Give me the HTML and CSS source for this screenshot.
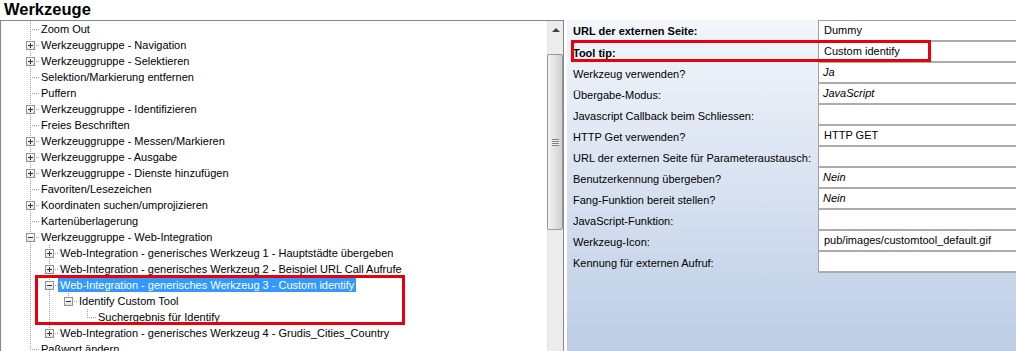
FILE: index.html
```html
<!DOCTYPE html>
<html lang="de">
<head>
  <meta charset="UTF-8">
  <meta name="viewport" content="width=device-width, initial-scale=1.0">
  <title>Werkzeuge</title>
  <link rel="stylesheet" href="styles.css">
</head>
<body>
  <header class="title">Werkzeuge</header>

  <main class="layout">
    <!-- Werkzeug-Baum -->
    <section class="tree-panel">
      <div class="tree">
        <div class="node"><span class="g"></span><span class="c"></span><span class="label">Zoom Out</span></div>
        <div class="node"><span class="g"></span><span class="c"><span class="box plus"></span></span><span class="label">Werkzeuggruppe - Navigation</span></div>
        <div class="node"><span class="g"></span><span class="c"><span class="box plus"></span></span><span class="label">Werkzeuggruppe - Selektieren</span></div>
        <div class="node"><span class="g"></span><span class="c"></span><span class="label">Selektion/Markierung entfernen</span></div>
        <div class="node"><span class="g"></span><span class="c"></span><span class="label">Puffern</span></div>
        <div class="node"><span class="g"></span><span class="c"><span class="box plus"></span></span><span class="label">Werkzeuggruppe - Identifizieren</span></div>
        <div class="node"><span class="g"></span><span class="c"></span><span class="label">Freies Beschriften</span></div>
        <div class="node"><span class="g"></span><span class="c"><span class="box plus"></span></span><span class="label">Werkzeuggruppe - Messen/Markieren</span></div>
        <div class="node"><span class="g"></span><span class="c"><span class="box plus"></span></span><span class="label">Werkzeuggruppe - Ausgabe</span></div>
        <div class="node"><span class="g"></span><span class="c"><span class="box plus"></span></span><span class="label">Werkzeuggruppe - Dienste hinzufügen</span></div>
        <div class="node"><span class="g"></span><span class="c"></span><span class="label">Favoriten/Lesezeichen</span></div>
        <div class="node"><span class="g"></span><span class="c"><span class="box plus"></span></span><span class="label">Koordinaten suchen/umprojizieren</span></div>
        <div class="node"><span class="g"></span><span class="c"></span><span class="label">Kartenüberlagerung</span></div>
        <div class="node"><span class="g"></span><span class="c"><span class="box"></span></span><span class="label">Werkzeuggruppe - Web-Integration</span></div>
        <div class="node"><span class="g"></span><span class="g line"></span><span class="c"><span class="box plus"></span></span><span class="label">Web-Integration - generisches Werkzeug 1 - Hauptstädte übergeben</span></div>
        <div class="node"><span class="g"></span><span class="g line"></span><span class="c"><span class="box plus"></span></span><span class="label">Web-Integration - generisches Werkzeug 2 - Beispiel URL Call Aufrufe</span></div>
        <div class="node"><span class="g"></span><span class="g line"></span><span class="c"><span class="box"></span></span><span class="label selected">Web-Integration - generisches Werkzeug 3 - Custom identify</span></div>
        <div class="node"><span class="g"></span><span class="g line"></span><span class="g line"></span><span class="c last"><span class="box"></span></span><span class="label">Identify Custom Tool</span></div>
        <div class="node"><span class="g"></span><span class="g line"></span><span class="g line"></span><span class="g"></span><span class="c last"></span><span class="label">Suchergebnis für Identify</span></div>
        <div class="node"><span class="g"></span><span class="g line"></span><span class="c last"><span class="box plus"></span></span><span class="label">Web-Integration - generisches Werkzeug 4 - Grudis_Cities_Country</span></div>
        <div class="node"><span class="g"></span><span class="c"></span><span class="label">Paßwort ändern</span></div>
      </div>

      <div class="scrollbar">
        <div class="scroll-up"><span class="arrow"></span></div>
        <div class="scroll-thumb"></div>
      </div>

      <div class="mark mark-tree"></div>
    </section>

    <!-- Eigenschaften -->
    <section class="props">
      <div class="prop-grid">
        <div class="key strong">URL der externen Seite:</div><div class="val first">Dummy</div>
        <div class="key strong">Tool tip:</div><div class="val">Custom identify</div>
        <div class="key">Werkzeug verwenden?</div><div class="val em">Ja</div>
        <div class="key">Übergabe-Modus:</div><div class="val em">JavaScript</div>
        <div class="key">Javascript Callback beim Schliessen:</div><div class="val"></div>
        <div class="key">HTTP Get verwenden?</div><div class="val">HTTP GET</div>
        <div class="key">URL der externen Seite für Parameteraustausch:</div><div class="val"></div>
        <div class="key">Benutzerkennung übergeben?</div><div class="val em">Nein</div>
        <div class="key">Fang-Funktion bereit stellen?</div><div class="val em">Nein</div>
        <div class="key">JavaScript-Funktion:</div><div class="val"></div>
        <div class="key">Werkzeug-Icon:</div><div class="val">pub/images/customtool_default.gif</div>
        <div class="key">Kennung für externen Aufruf:</div><div class="val"></div>
      </div>

      <div class="mark mark-tip"></div>
    </section>
  </main>
</body>
</html>
```

FILE: styles.css
```css
/* General styles */
* {
  box-sizing: border-box;
}

html, body {
  margin: 0;
  height: 100%;
}

body {
  font-family: "Liberation Sans", Arial, sans-serif;
  font-size: 11px;
  color: #000;
  background-color: #fff;
  overflow: hidden;
}

.title {
  height: 20px;
  padding-left: 4px;
  font-size: 16.5px;
  font-weight: bold;
  line-height: 19px;
}

.layout {
  display: flex;
  gap: 3px;
  height: 331px;
}

/* Tree */
.tree-panel {
  position: relative;
  display: flex;
  width: 564px;
  border: 1px solid #828790;
  border-bottom: none;
}

.tree {
  flex: 1;
  overflow: hidden;
}

.node {
  display: flex;
  align-items: center;
  height: 16px;
  white-space: nowrap;
}

.g, .c {
  position: relative;
  flex: none;
  width: 19px;
  height: 16px;
}

.g.line::before,
.c::before {
  content: "";
  position: absolute;
  left: 10px;
  top: 0;
  width: 1px;
  height: 16px;
  background: repeating-linear-gradient(to bottom, #a0a0a0 0 1px, transparent 1px 2px);
}

.c.last::before {
  height: 9px;
}

.c::after {
  content: "";
  position: absolute;
  left: 10px;
  top: 8px;
  width: 9px;
  height: 1px;
  background: repeating-linear-gradient(to right, #a0a0a0 0 1px, transparent 1px 2px);
}

.box {
  position: absolute;
  left: 6px;
  top: 4px;
  z-index: 1;
  width: 9px;
  height: 9px;
  border: 1px solid #919191;
  background:
    linear-gradient(#333, #333) center / 5px 1px no-repeat,
    linear-gradient(to bottom, #fff, #e4e4e4);
}

.box.plus {
  background:
    linear-gradient(#333, #333) center / 5px 1px no-repeat,
    linear-gradient(#333, #333) center / 1px 5px no-repeat,
    linear-gradient(to bottom, #fff, #e4e4e4);
}

.label {
  padding: 0 2px;
  line-height: 14px;
}

.label.selected {
  background-color: #3399ff;
  color: #fff;
}

/* Scrollbar */
.scrollbar {
  flex: none;
  display: flex;
  flex-direction: column;
  width: 16px;
  background-color: #ececec;
  border-left: 1px solid #e2e2e2;
}

.scroll-up {
  display: flex;
  align-items: center;
  justify-content: center;
  height: 17px;
}

.arrow {
  width: 0;
  height: 0;
  border-left: 4px solid transparent;
  border-right: 4px solid transparent;
  border-bottom: 4px solid #404040;
}

.scroll-thumb {
  display: flex;
  align-items: center;
  justify-content: center;
  height: 176px;
  margin-top: 16px;
  margin-left: -1px;
  border: 1px solid #979797;
  border-radius: 2px;
  background: linear-gradient(to right, #f4f4f4, #e3e3e3 45%, #d0d0d0);
}

.scroll-thumb::after {
  content: "";
  width: 7px;
  height: 7px;
  background: repeating-linear-gradient(to bottom, #7f7f7f 0 1px, #f2f2f2 1px 2px);
}

/* Properties */
.props {
  position: relative;
  flex: 1;
  background: linear-gradient(to bottom, #f3f6fb, #bccde5);
}

.prop-grid {
  display: grid;
  grid-template-columns: 251px 1fr;
}

.key {
  display: flex;
  align-items: center;
  padding-left: 6px;
  white-space: nowrap;
}

.key.strong {
  font-weight: bold;
}

.val {
  height: 21px;
  padding-left: 5px;
  line-height: 19px;
  background-color: #fff;
  border-left: 1px solid #a0a0a0;
  border-bottom: 2px solid #acacac;
}

.val.first {
  height: 22px;
  border-top: 1px solid #a0a0a0;
}

.val.em {
  font-style: italic;
  padding-left: 4px;
}

/* Annotations */
.mark {
  position: absolute;
  border: 3px solid #e8000b;
}

.mark-tree {
  left: 34px;
  top: 254px;
  width: 370px;
  height: 50px;
}

.mark-tip {
  left: 4px;
  top: 20px;
  width: 360px;
  height: 22px;
}
```
